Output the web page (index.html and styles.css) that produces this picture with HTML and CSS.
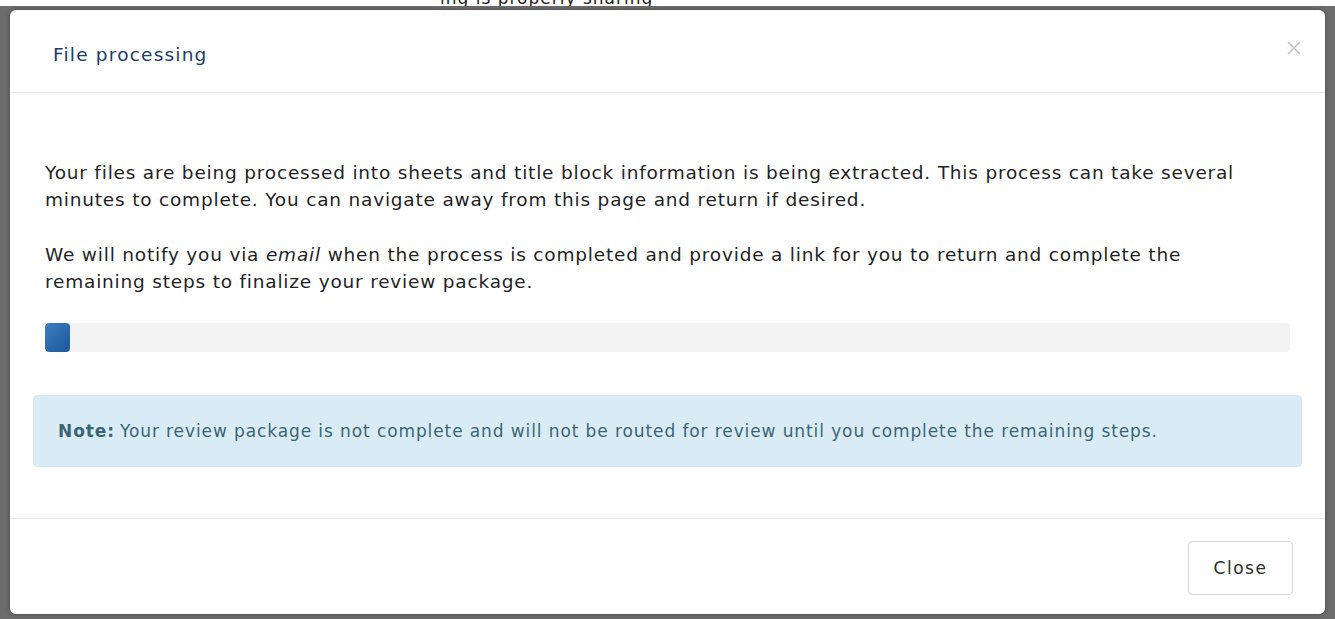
FILE: index.html
```html
<!DOCTYPE html>
<html lang="en">
<head>
<meta charset="utf-8">
<title>File processing</title>
<link rel="stylesheet" href="styles.css">
</head>
<body>
  <div class="page-strip">
    <span class="page-strip-text">ing is properly sharing</span>
  </div>
  <div class="backdrop">
    <div class="modal" role="dialog" aria-labelledby="modal-title">
      <div class="modal-header">
        <h4 class="modal-title" id="modal-title">File processing</h4>
        <button class="modal-x" type="button" aria-label="Close">
          <svg width="14" height="14" viewBox="0 0 14 14"><path d="M1 1L13 13M13 1L1 13" stroke="#c4c4c4" stroke-width="1.6" fill="none"/></svg>
        </button>
      </div>
      <div class="modal-body">
        <p class="body-text">Your files are being processed into sheets and title block information is being extracted. This process can take several minutes to complete. You can navigate away from this page and return if desired.</p>
        <p class="body-text">We will notify you via <em>email</em> when the process is completed and provide a link for you to return and complete the remaining steps to finalize your review package.</p>
        <div class="progress">
          <div class="progress-bar" style="width: 25px"></div>
        </div>
        <div class="alert-info"><strong>Note:</strong> Your review package is not complete and will not be routed for review until you complete the remaining steps.</div>
      </div>
      <div class="modal-footer">
        <button class="btn" type="button">Close</button>
      </div>
    </div>
  </div>
</body>
</html>
```
FILE: styles.css
```css
html, body {
  margin: 0;
  padding: 0;
  height: 100%;
}

body {
  display: flex;
  flex-direction: column;
  background: #ffffff;
  font-family: "DejaVu Sans", "Noto Sans", sans-serif;
  overflow: hidden;
}

/* sliver of the page sitting above the dialog backdrop */
.page-strip {
  height: 6px;
  overflow: hidden;
  position: relative;
  background: #ffffff;
}

.page-strip-text {
  position: absolute;
  left: 440px;
  bottom: -1px;
  font-size: 17px;
  line-height: 17px;
  letter-spacing: 1px;
  color: #222;
  white-space: nowrap;
}

.backdrop {
  flex: 1;
  display: flex;
  padding: 4px 10px 5px 10px;
  background: #6c6c6c;
  min-height: 0;
}

.modal {
  flex: 1;
  display: flex;
  flex-direction: column;
  background: #ffffff;
  border-radius: 6px;
  box-shadow: 0 0 4px rgba(0, 0, 0, 0.35);
}

.modal-header {
  display: flex;
  align-items: center;
  justify-content: space-between;
  height: 83px;
  padding: 0 24px 0 43px;
  border-bottom: 1px solid #ececec;
  box-sizing: border-box;
}

.modal-title {
  margin: 0;
  font-size: 18.5px;
  font-weight: 400;
  letter-spacing: 1.2px;
  color: #1c3a6b;
  padding-top: 7px;
}

.modal-x {
  border: 0;
  background: none;
  padding: 0;
  margin-top: -6px;
  cursor: pointer;
  line-height: 0;
}

.modal-body {
  flex: 1;
  padding: 66px 35px 0 35px;
}

.body-text {
  margin: 0 0 28px 0;
  padding-right: 14px;
  font-size: 18.5px;
  line-height: 27px;
  letter-spacing: 0.8px;
  color: #1f1f1f;
}

.body-text em {
  font-style: italic;
}

.progress {
  height: 29px;
  margin-top: 27px;
  background: #f3f3f3;
  border-radius: 4px;
  overflow: hidden;
}

.progress-bar {
  height: 100%;
  background: linear-gradient(135deg, #3d7fc4 0%, #2a68ab 55%, #1f5a9a 100%);
  border-radius: 4px;
}

.alert-info {
  margin: 43px -12px 0 -12px;
  height: 72px;
  display: flex;
  align-items: center;
  padding: 0 24px;
  background: #d9ecf6;
  border: 1px solid #d1e7f2;
  border-radius: 4px;
  box-sizing: border-box;
  font-size: 17px;
  letter-spacing: 0.9px;
  color: #3b6576;
}

.alert-info strong {
  font-weight: 700;
  margin-right: 5px;
}

.modal-footer {
  display: flex;
  justify-content: flex-end;
  align-items: center;
  height: 96px;
  padding: 0 32px 0 0;
  border-top: 1px solid #ececec;
  box-sizing: border-box;
}

.btn {
  width: 105px;
  height: 54px;
  margin-top: 2px;
  border: 1px solid #d6d6d6;
  border-radius: 4px;
  background: #ffffff;
  font-family: "DejaVu Sans", sans-serif;
  font-size: 17px;
  letter-spacing: 1.5px;
  color: #2b2b2b;
  cursor: pointer;
}
```
